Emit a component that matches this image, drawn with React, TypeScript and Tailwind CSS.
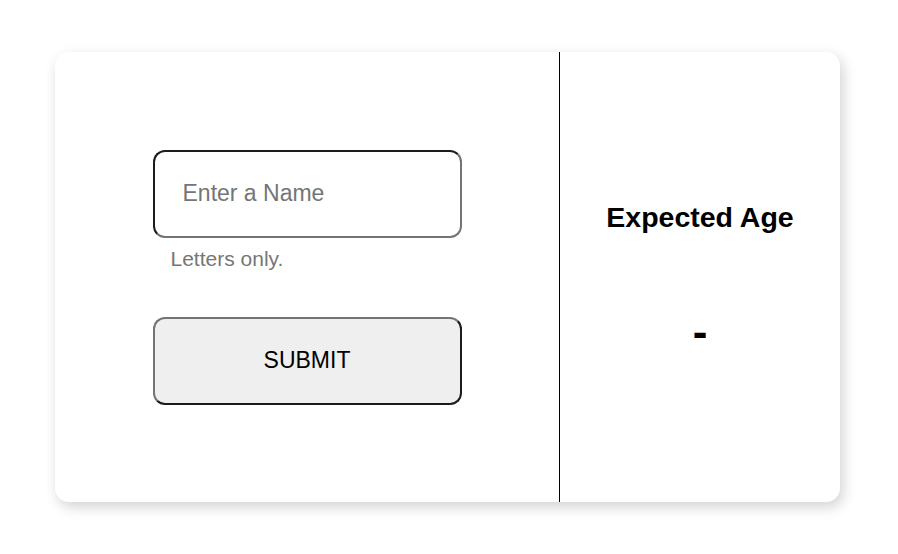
import { useState } from "react"

export default function App() {
  const [name, setName] = useState("")

  return (
    <div className="flex h-screen w-full items-center bg-white pl-[55px] font-['Liberation_Sans',Arial,sans-serif]">
      <div className="flex h-[450px] w-[785px] overflow-hidden rounded-[14px] bg-white shadow-[3px_5px_14px_rgba(0,0,0,0.18)]">
        {/* Left - form */}
        <div className="flex w-[505px] flex-col items-center justify-center border-r border-black">
          <div className="flex w-[309px] flex-col">
            <input
              value={name}
              onChange={(e) => setName(e.target.value)}
              placeholder="Enter a Name"
              className="h-[88px] w-full rounded-[12px] border-[2.5px] border-t-[#1c1c1c] border-l-[#1c1c1c] border-r-[#747474] border-b-[#747474] bg-white pl-[28px] text-[23px] text-black outline-none placeholder:text-[#757575]"
            />
            <p className="mt-[9px] pl-[18px] text-[21px] leading-[24px] text-[#767676]">Letters only.</p>
            <button className="mt-[46px] h-[88px] w-full rounded-[12px] border-[2.5px] border-t-[#747474] border-l-[#747474] border-r-[#1c1c1c] border-b-[#1c1c1c] bg-[#efefef] text-[23px] text-black">
              SUBMIT
            </button>
          </div>
        </div>

        {/* Right - result */}
        <div className="flex flex-1 flex-col items-center justify-center">
          <h2 className="text-[28.5px] font-bold text-black">Expected Age</h2>
          <div className="mt-[68px] text-[44px] font-bold leading-[1.15] text-black">-</div>
        </div>
      </div>
    </div>
  )
}
